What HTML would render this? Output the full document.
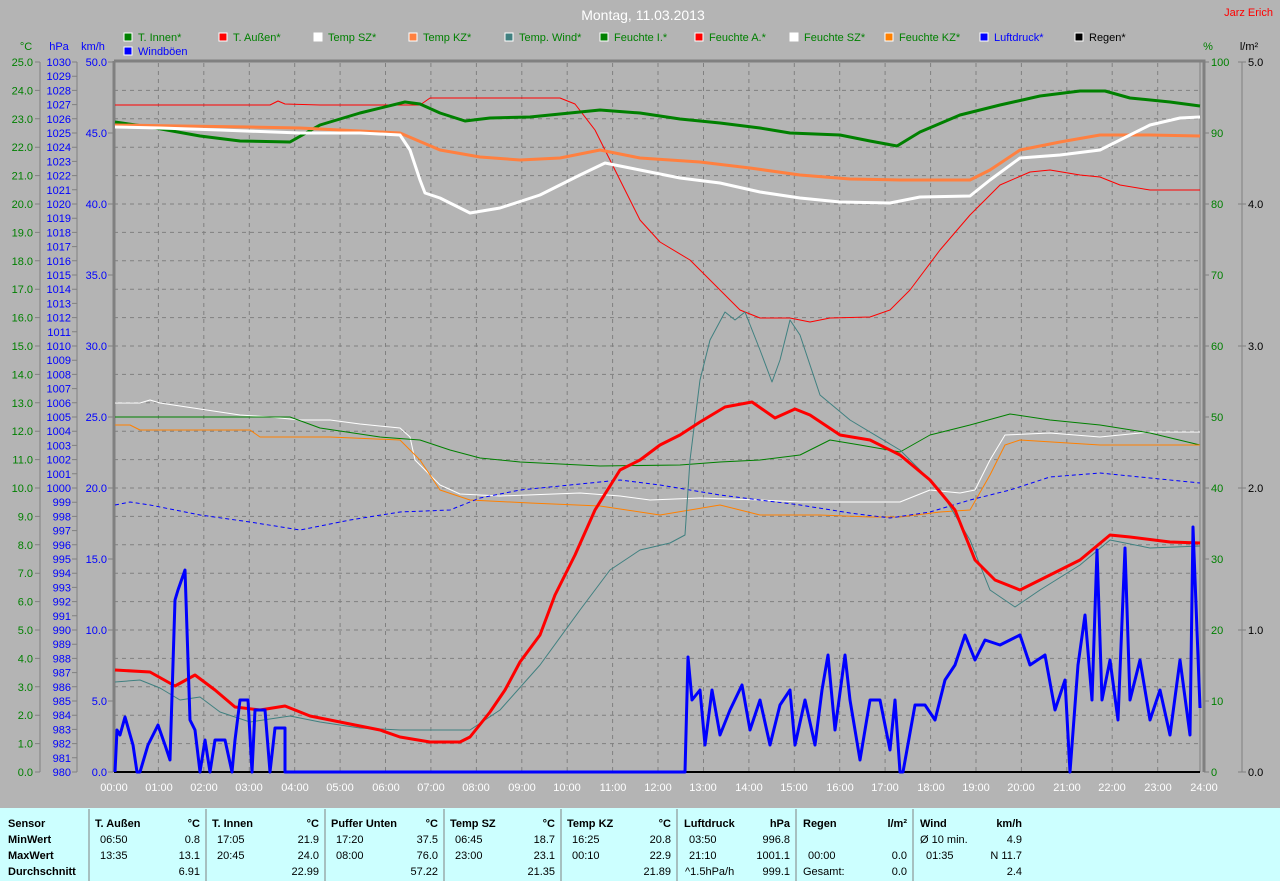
<!DOCTYPE html>
<html><head><meta charset="utf-8"><style>
html,body{margin:0;padding:0;background:#b4b4b4;width:1280px;height:881px;overflow:hidden}
svg{display:block;font-family:"Liberation Sans",sans-serif;font-size:11px}
</style></head><body>
<svg width="1280" height="881" viewBox="0 0 1280 881" xmlns="http://www.w3.org/2000/svg">
<rect width="1280" height="881" fill="#b4b4b4"/>
<text x="643" y="20" fill="#fff" font-size="14" text-anchor="middle">Montag, 11.03.2013</text>
<text x="1273" y="16" fill="#f00" text-anchor="end">Jarz Erich</text>
<g font-size="11">
<rect x="124" y="33" width="8" height="8" fill="#008000" stroke="#fff"/><text x="138" y="41" fill="#008000">T. Innen*</text>
<rect x="219" y="33" width="8" height="8" fill="#f00" stroke="#fff"/><text x="233" y="41" fill="#008000">T. Außen*</text>
<rect x="314" y="33" width="8" height="8" fill="#fff" stroke="#fff"/><text x="328" y="41" fill="#008000">Temp SZ*</text>
<rect x="409" y="33" width="8" height="8" fill="#ff8040" stroke="#fff"/><text x="423" y="41" fill="#008000">Temp KZ*</text>
<rect x="505" y="33" width="8" height="8" fill="#408080" stroke="#fff"/><text x="519" y="41" fill="#008000">Temp. Wind*</text>
<rect x="600" y="33" width="8" height="8" fill="#008000" stroke="#fff"/><text x="614" y="41" fill="#008000">Feuchte I.*</text>
<rect x="695" y="33" width="8" height="8" fill="#f00" stroke="#fff"/><text x="709" y="41" fill="#008000">Feuchte A.*</text>
<rect x="790" y="33" width="8" height="8" fill="#fff" stroke="#fff"/><text x="804" y="41" fill="#008000">Feuchte SZ*</text>
<rect x="885" y="33" width="8" height="8" fill="#ff8000" stroke="#fff"/><text x="899" y="41" fill="#008000">Feuchte KZ*</text>
<rect x="980" y="33" width="8" height="8" fill="#00f" stroke="#fff"/><text x="994" y="41" fill="#00f">Luftdruck*</text>
<rect x="1075" y="33" width="8" height="8" fill="#000" stroke="#fff"/><text x="1089" y="41" fill="#000">Regen*</text>
<rect x="124" y="47" width="8" height="8" fill="#00f" stroke="#fff"/><text x="138" y="55" fill="#00f">Windböen</text>
</g>
<text x="26" y="50" fill="#008000" text-anchor="middle">°C</text>
<text x="59" y="50" fill="#00f" text-anchor="middle">hPa</text>
<text x="93" y="50" fill="#00f" text-anchor="middle">km/h</text>
<text x="1208" y="50" fill="#008000" text-anchor="middle">%</text>
<text x="1249" y="50" fill="#000" text-anchor="middle">l/m²</text>
<g stroke="#808080" stroke-dasharray="4,4" stroke-width="1" fill="none">
<path d="M114 90.4H1200M114 118.8H1200M114 147.2H1200M114 175.6H1200M114 204H1200M114 232.4H1200M114 260.8H1200M114 289.2H1200M114 317.6H1200M114 346H1200M114 374.4H1200M114 402.8H1200M114 431.2H1200M114 459.6H1200M114 488H1200M114 516.4H1200M114 544.8H1200M114 573.2H1200M114 601.6H1200M114 630H1200M114 658.4H1200M114 686.8H1200M114 715.2H1200M114 743.6H1200"/>
<path d="M158.4 63V772M203.8 63V772M249.3 63V772M294.7 63V772M340.1 63V772M385.5 63V772M430.9 63V772M476.4 63V772M521.8 63V772M567.2 63V772M612.6 63V772M658 63V772M703.5 63V772M748.9 63V772M794.3 63V772M839.7 63V772M885.1 63V772M930.6 63V772M976 63V772M1021.4 63V772M1066.8 63V772M1112.2 63V772M1157.7 63V772"/>
</g>
<path d="M114 61H1204V772M114 61V772" stroke="#808080" stroke-width="3" fill="none"/>
<path d="M1200 62V772" stroke="#808080" stroke-width="1"/>
<g stroke="#808080" fill="none">
<path d="M40 62V772M77 62V772"/>
<path d="M35 62H40M35 90.4H40M35 118.8H40M35 147.2H40M35 175.6H40M35 204H40M35 232.4H40M35 260.8H40M35 289.2H40M35 317.6H40M35 346H40M35 374.4H40M35 402.8H40M35 431.2H40M35 459.6H40M35 488H40M35 516.4H40M35 544.8H40M35 573.2H40M35 601.6H40M35 630H40M35 658.4H40M35 686.8H40M35 715.2H40M35 743.6H40M35 772H40"/>
<path d="M72 62H77M72 76.2H77M72 90.4H77M72 104.6H77M72 118.8H77M72 133H77M72 147.2H77M72 161.4H77M72 175.6H77M72 189.8H77M72 204H77M72 218.2H77M72 232.4H77M72 246.6H77M72 260.8H77M72 275H77M72 289.2H77M72 303.4H77M72 317.6H77M72 331.8H77M72 346H77M72 360.2H77M72 374.4H77M72 388.6H77M72 402.8H77M72 417H77M72 431.2H77M72 445.4H77M72 459.6H77M72 473.8H77M72 488H77M72 502.2H77M72 516.4H77M72 530.6H77M72 544.8H77M72 559H77M72 573.2H77M72 587.4H77M72 601.6H77M72 615.8H77M72 630H77M72 644.2H77M72 658.4H77M72 672.6H77M72 686.8H77M72 701H77M72 715.2H77M72 729.4H77M72 743.6H77M72 757.8H77M72 772H77"/>
<path d="M108 62H113M108 133H113M108 204H113M108 275H113M108 346H113M108 417H113M108 488H113M108 559H113M108 630H113M108 701H113M108 772H113"/>
<path d="M1204 62H1209M1204 133H1209M1204 204H1209M1204 275H1209M1204 346H1209M1204 417H1209M1204 488H1209M1204 559H1209M1204 630H1209M1204 701H1209M1204 772H1209"/>
<path d="M1242 62V772M1238 62H1246M1238 204H1246M1238 346H1246M1238 488H1246M1238 630H1246M1238 772H1246"/>
</g>
<g fill="#008000" text-anchor="end">
<text x="33" y="66">25.0</text><text x="33" y="94.4">24.0</text><text x="33" y="122.8">23.0</text><text x="33" y="151.2">22.0</text><text x="33" y="179.6">21.0</text><text x="33" y="208">20.0</text><text x="33" y="236.4">19.0</text><text x="33" y="264.8">18.0</text><text x="33" y="293.2">17.0</text><text x="33" y="321.6">16.0</text><text x="33" y="350">15.0</text><text x="33" y="378.4">14.0</text><text x="33" y="406.8">13.0</text><text x="33" y="435.2">12.0</text><text x="33" y="463.6">11.0</text><text x="33" y="492">10.0</text><text x="33" y="520.4">9.0</text><text x="33" y="548.8">8.0</text><text x="33" y="577.2">7.0</text><text x="33" y="605.6">6.0</text><text x="33" y="634">5.0</text><text x="33" y="662.4">4.0</text><text x="33" y="690.8">3.0</text><text x="33" y="719.2">2.0</text><text x="33" y="747.6">1.0</text><text x="33" y="776">0.0</text>
</g>
<g fill="#00f" text-anchor="end">
<text x="71" y="66">1030</text><text x="71" y="80.2">1029</text><text x="71" y="94.4">1028</text><text x="71" y="108.6">1027</text><text x="71" y="122.8">1026</text><text x="71" y="137">1025</text><text x="71" y="151.2">1024</text><text x="71" y="165.4">1023</text><text x="71" y="179.6">1022</text><text x="71" y="193.8">1021</text><text x="71" y="208">1020</text><text x="71" y="222.2">1019</text><text x="71" y="236.4">1018</text><text x="71" y="250.6">1017</text><text x="71" y="264.8">1016</text><text x="71" y="279">1015</text><text x="71" y="293.2">1014</text><text x="71" y="307.4">1013</text><text x="71" y="321.6">1012</text><text x="71" y="335.8">1011</text><text x="71" y="350">1010</text><text x="71" y="364.2">1009</text><text x="71" y="378.4">1008</text><text x="71" y="392.6">1007</text><text x="71" y="406.8">1006</text><text x="71" y="421">1005</text><text x="71" y="435.2">1004</text><text x="71" y="449.4">1003</text><text x="71" y="463.6">1002</text><text x="71" y="477.8">1001</text><text x="71" y="492">1000</text><text x="71" y="506.2">999</text><text x="71" y="520.4">998</text><text x="71" y="534.6">997</text><text x="71" y="548.8">996</text><text x="71" y="563">995</text><text x="71" y="577.2">994</text><text x="71" y="591.4">993</text><text x="71" y="605.6">992</text><text x="71" y="619.8">991</text><text x="71" y="634">990</text><text x="71" y="648.2">989</text><text x="71" y="662.4">988</text><text x="71" y="676.6">987</text><text x="71" y="690.8">986</text><text x="71" y="705">985</text><text x="71" y="719.2">984</text><text x="71" y="733.4">983</text><text x="71" y="747.6">982</text><text x="71" y="761.8">981</text><text x="71" y="776">980</text>
<text x="107" y="66">50.0</text><text x="107" y="137">45.0</text><text x="107" y="208">40.0</text><text x="107" y="279">35.0</text><text x="107" y="350">30.0</text><text x="107" y="421">25.0</text><text x="107" y="492">20.0</text><text x="107" y="563">15.0</text><text x="107" y="634">10.0</text><text x="107" y="705">5.0</text><text x="107" y="776">0.0</text>
</g>
<g fill="#008000">
<text x="1211" y="66">100</text><text x="1211" y="137">90</text><text x="1211" y="208">80</text><text x="1211" y="279">70</text><text x="1211" y="350">60</text><text x="1211" y="421">50</text><text x="1211" y="492">40</text><text x="1211" y="563">30</text><text x="1211" y="634">20</text><text x="1211" y="705">10</text><text x="1211" y="776">0</text>
</g>
<g fill="#000">
<text x="1248" y="66">5.0</text><text x="1248" y="208">4.0</text><text x="1248" y="350">3.0</text><text x="1248" y="492">2.0</text><text x="1248" y="634">1.0</text><text x="1248" y="776">0.0</text>
</g>
<g fill="#fff" text-anchor="middle">
<text x="114" y="791">00:00</text><text x="159" y="791">01:00</text><text x="204" y="791">02:00</text><text x="249" y="791">03:00</text><text x="295" y="791">04:00</text><text x="340" y="791">05:00</text><text x="386" y="791">06:00</text><text x="431" y="791">07:00</text><text x="476" y="791">08:00</text><text x="522" y="791">09:00</text><text x="567" y="791">10:00</text><text x="613" y="791">11:00</text><text x="658" y="791">12:00</text><text x="703" y="791">13:00</text><text x="749" y="791">14:00</text><text x="794" y="791">15:00</text><text x="840" y="791">16:00</text><text x="885" y="791">17:00</text><text x="931" y="791">18:00</text><text x="976" y="791">19:00</text><text x="1021" y="791">20:00</text><text x="1067" y="791">21:00</text><text x="1112" y="791">22:00</text><text x="1158" y="791">23:00</text><text x="1204" y="791">24:00</text>
</g>
<g fill="none" stroke-linejoin="round">
<polyline stroke="#f00" stroke-width="1" points="115,105 270,105 278,101 285,104 320,105 420,105 430,98 560,98 575,104 595,130 620,180 640,220 660,242 690,260 720,290 740,310 760,318 790,318 810,322 830,318 870,317 890,310 910,290 940,250 970,215 1000,185 1030,172 1050,170 1080,175 1100,177 1120,185 1150,190 1200,190"/>
<polyline stroke="#008000" stroke-width="3" points="115,122 150,127 200,136 240,141 290,142 320,125 360,113 405,102 420,104 440,113 465,121 490,118 530,117 570,113 600,110 640,113 680,119 720,123 760,128 790,133 840,135 870,141 897,146 920,132 960,115 1000,105 1040,96 1080,91 1105,91 1130,98 1170,102 1200,106"/>
<polyline stroke="#ff8040" stroke-width="3" points="115,125 180,126 250,127 300,128 400,133 440,150 480,157 520,160 560,158 600,150 640,158 700,162 750,168 800,175 850,179 900,180 970,180 990,170 1020,150 1060,142 1100,135 1150,135 1200,136"/>
<polyline stroke="#fff" stroke-width="3" points="115,127 160,128 220,130 300,133 360,133 400,135 410,150 420,180 425,193 440,198 470,213 500,208 540,195 580,175 605,163 640,170 680,178 720,183 760,192 800,198 840,202 890,203 920,197 970,196 990,180 1020,158 1060,155 1100,150 1120,140 1150,125 1180,118 1200,117"/>
<polyline stroke="#fff" stroke-width="1" points="115,403 140,403 150,400 160,403 240,415 270,417 300,420 330,420 360,424 400,428 410,437 415,460 425,470 440,485 460,494 500,496 580,493 620,496 650,500 700,498 760,500 800,502 900,502 930,490 960,493 975,490 990,460 1005,435 1050,433 1100,437 1150,432 1200,432"/>
<polyline stroke="#008000" stroke-width="1" points="115,417 290,417 320,428 380,437 420,440 450,450 480,458 520,462 600,466 680,465 720,462 760,460 800,455 830,440 860,445 900,452 930,435 970,425 1010,414 1050,420 1100,425 1150,433 1200,445"/>
<polyline stroke="#ff8000" stroke-width="1" points="115,425 130,425 140,430 250,430 260,437 330,437 400,440 420,460 440,490 470,500 530,503 600,506 660,515 720,505 760,515 820,515 870,517 900,517 940,512 970,510 990,475 1005,445 1020,440 1100,445 1200,445"/>
<polyline stroke="#00f" stroke-width="1" stroke-dasharray="4,3" points="115,505 130,502 150,505 200,515 250,522 300,530 350,520 400,512 450,510 480,498 520,490 570,485 620,480 660,485 720,495 800,505 850,513 890,518 930,512 970,500 1010,490 1050,477 1100,473 1150,478 1200,483"/>
<polyline stroke="#408080" stroke-width="1" points="115,682 140,680 160,688 180,700 200,697 220,712 250,722 290,716 320,722 360,728 400,730 470,730 500,710 540,665 580,610 610,570 640,550 670,543 685,535 690,460 700,380 710,340 725,312 735,320 745,312 760,350 772,382 780,360 790,320 800,335 820,395 850,420 900,450 940,490 970,540 990,590 1015,607 1040,590 1080,565 1110,540 1150,548 1200,546"/>
<polyline stroke="#f00" stroke-width="3" points="115,670 150,672 175,686 195,675 215,690 235,707 260,710 285,706 310,716 340,722 380,730 400,737 430,742 460,742 470,737 490,712 505,690 520,662 540,635 555,595 575,555 595,510 620,470 640,460 660,445 680,435 700,422 725,407 752,402 775,418 795,409 810,415 840,435 870,440 900,455 930,480 955,510 975,560 995,580 1020,590 1050,575 1080,560 1110,535 1130,537 1170,542 1200,543"/>
<path d="M114 772H1200" stroke="#000" stroke-width="2"/>
<polyline stroke="#00f" stroke-width="3" points="115,772 117,730 120,735 125,717 133,745 137,772 140,772 148,745 158,725 165,745 170,760 175,600 178,590 185,570 190,720 195,730 200,772 205,740 210,772 215,740 225,740 232,772 235,740 240,700 248,700 252,772 255,710 265,710 270,772 275,728 285,728 285,772 685,772 688,657 692,700 700,690 705,745 712,690 720,735 730,710 742,685 750,730 760,700 770,745 780,705 790,690 795,745 805,700 815,745 822,690 828,655 835,730 845,655 850,700 860,760 870,700 880,700 890,750 895,700 900,772 903,772 915,705 925,705 935,720 945,680 955,665 965,635 975,660 985,640 1000,645 1010,640 1020,635 1030,665 1045,655 1055,710 1065,680 1070,772 1078,665 1085,615 1092,700 1097,550 1102,700 1110,660 1118,720 1125,548 1130,700 1140,660 1150,720 1160,690 1170,735 1180,660 1190,735 1193,527 1200,708"/>
</g>
<rect x="0" y="808" width="1280" height="73" fill="#ccffff"/>
<path d="M89 809V881M206 809V881M325 809V881M444 809V881M561 809V881M677 809V881M796 809V881M913 809V881" stroke="#808080"/>
<g font-size="11" fill="#000">
<g font-weight="bold"><text x="8" y="827">Sensor</text><text x="8" y="843">MinWert</text><text x="8" y="859">MaxWert</text><text x="8" y="875">Durchschnitt</text>
<text x="95" y="827">T. Außen</text><text x="200" y="827" text-anchor="end">°C</text>
<text x="212" y="827">T. Innen</text><text x="319" y="827" text-anchor="end">°C</text>
<text x="331" y="827">Puffer Unten</text><text x="438" y="827" text-anchor="end">°C</text>
<text x="450" y="827">Temp SZ</text><text x="555" y="827" text-anchor="end">°C</text>
<text x="567" y="827">Temp KZ</text><text x="671" y="827" text-anchor="end">°C</text>
<text x="684" y="827">Luftdruck</text><text x="790" y="827" text-anchor="end">hPa</text>
<text x="803" y="827">Regen</text><text x="907" y="827" text-anchor="end">l/m²</text>
<text x="920" y="827">Wind</text><text x="1022" y="827" text-anchor="end">km/h</text></g>
<text x="100" y="843">06:50</text><text x="100" y="859">13:35</text>
<text x="217" y="843">17:05</text><text x="217" y="859">20:45</text>
<text x="336" y="843">17:20</text><text x="336" y="859">08:00</text>
<text x="455" y="843">06:45</text><text x="455" y="859">23:00</text>
<text x="572" y="843">16:25</text><text x="572" y="859">00:10</text>
<text x="689" y="843">03:50</text><text x="689" y="859">21:10</text><text x="685" y="875">^1.5hPa/h</text>
<text x="808" y="859">00:00</text><text x="803" y="875">Gesamt:</text>
<text x="920" y="843">Ø 10 min.</text><text x="926" y="859">01:35</text>
<g text-anchor="end">
<text x="200" y="843">0.8</text><text x="200" y="859">13.1</text><text x="200" y="875">6.91</text>
<text x="319" y="843">21.9</text><text x="319" y="859">24.0</text><text x="319" y="875">22.99</text>
<text x="438" y="843">37.5</text><text x="438" y="859">76.0</text><text x="438" y="875">57.22</text>
<text x="555" y="843">18.7</text><text x="555" y="859">23.1</text><text x="555" y="875">21.35</text>
<text x="671" y="843">20.8</text><text x="671" y="859">22.9</text><text x="671" y="875">21.89</text>
<text x="790" y="843">996.8</text><text x="790" y="859">1001.1</text><text x="790" y="875">999.1</text>
<text x="907" y="859">0.0</text><text x="907" y="875">0.0</text>
<text x="1022" y="843">4.9</text><text x="1022" y="859">N 11.7</text><text x="1022" y="875">2.4</text>
</g>
</g>
</svg>
</body></html>
